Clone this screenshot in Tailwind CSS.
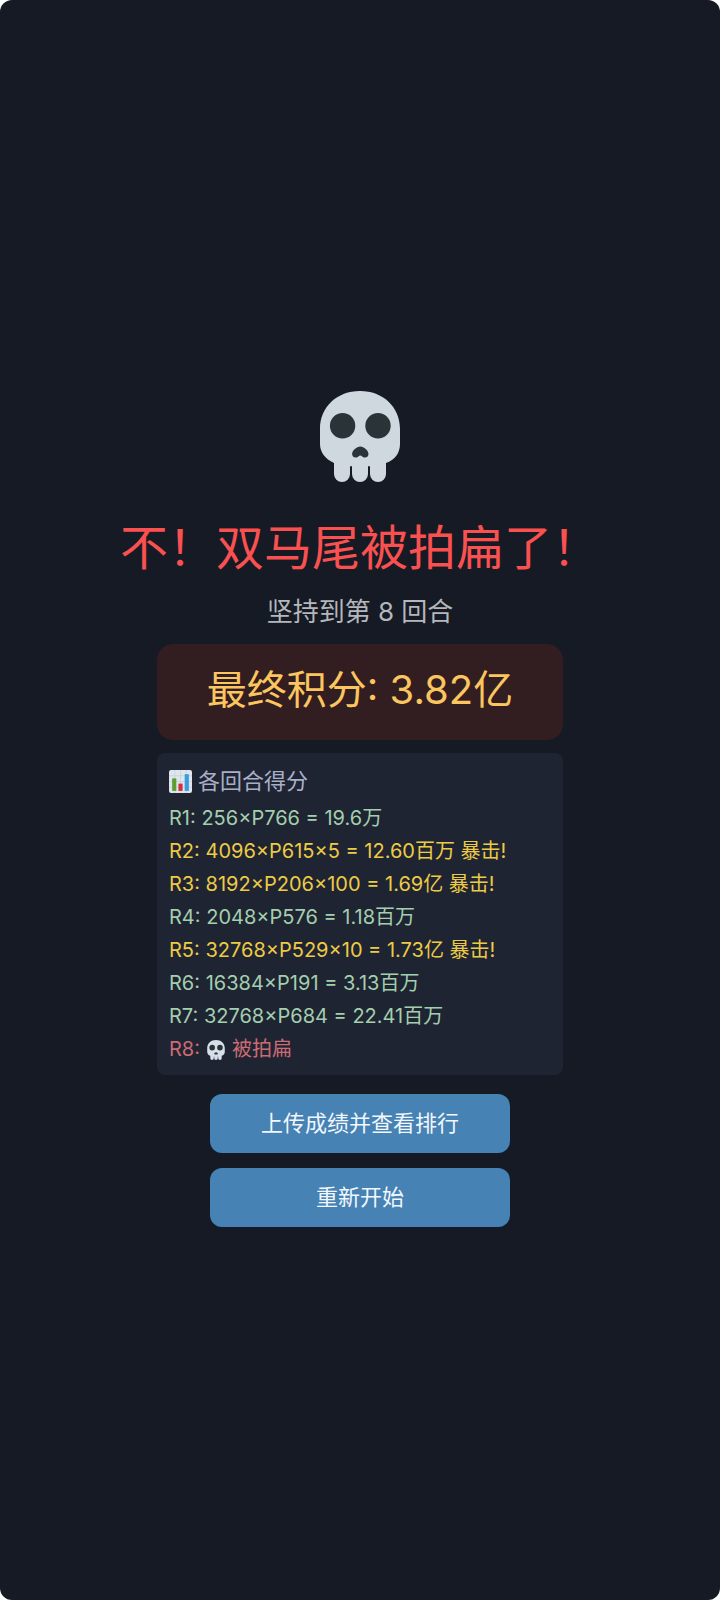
<!DOCTYPE html>
<html lang="zh-CN">
<head>
  <meta charset="UTF-8"/>
  <meta name="viewport" content="width=device-width, initial-scale=1.0"/>
  <title>游戏结束</title>
  <!-- Tailwind CSS -->
  <script src="https://cdn.jsdelivr.net/npm/@tailwindcss/browser@4"></script>
</head>
<body class="bg-white font-[Inter,'Noto_Sans_CJK_SC',sans-serif]">
  <main class="min-h-screen rounded-xl bg-[#151a24] flex flex-col items-center justify-center">
    <!-- Skull -->
    <svg class="w-20 h-[91px] mt-[18px]" viewBox="0 0 80 91" role="img" aria-label="骷髅">
      <path fill="#cfd8df" d="M40 0C63 0 80 16 80 38v15c0 9-5 16-14 19v11a8 8 0 0 1-16 0v-7a1 1 0 0 0-2 0v7a8 8 0 0 1-16 0v-7a1 1 0 0 0-2 0v7a8 8 0 0 1-16 0V72C5 68 0 61 0 53V38C0 16 17 0 40 0Z"/>
      <circle cx="22.600" cy="34.700" r="12.700" fill="#2a3337"/>
      <circle cx="58" cy="34.700" r="12.700" fill="#2a3337"/>
      <path fill="#2a3337" d="M40.300 55.500c3.500 0 8.200 4 8.200 7.500 0 3-3 4.300-5.200 3.200-1.300-.7-1.600-1.800-3-1.800s-1.700 1.100-3 1.800c-2.200 1.100-5.200-.2-5.200-3.200 0-3.500 4.700-7.500 8.200-7.500Z"/>
    </svg>

    <!-- Result -->
    <h1 class="mt-8 text-5xl leading-[68px] text-[#f95050]">不！双马尾被拍扁了！</h1>
    <p class="mt-[10px] text-[26px] leading-[40px] text-[#b4b7bc]">坚持到第 8 回合</p>
    <div class="mt-3 w-full max-w-[406px] h-24 rounded-2xl bg-[#321e20] text-center text-[40px] leading-[92px] text-[#fbc55f]">最终积分: 3.82亿</div>

    <!-- Round scores -->
    <section class="mt-[13px] w-full max-w-[406px] rounded-lg bg-[#1f2432] px-3 pt-3 pb-[9px]">
      <h2 class="flex items-center gap-[6px] h-8 text-[22px] leading-8 text-[#a9afc6]">
        <svg class="w-[23px] h-[23px]" viewBox="0 0 22 22" aria-hidden="true">
          <rect width="22" height="22" rx="2" fill="#dfe7ec"/>
          <path d="M0 5.500h22M0 11h22M0 16.500h22M5.500 0v22M11 0v22M16.500 0v22" stroke="#b9cdd8" stroke-width=".6"/>
          <path d="M3 8h4v12H3z" fill="#5c9e31"/>
          <path d="M9 13h4v7H9z" fill="#d32f3f"/>
          <path d="M15 4h4v16h-4z" fill="#3d9be0"/>
        </svg>
        各回合得分
      </h2>
      <ul class="mt-[5px] text-xl leading-[33px] text-[#a3cfae]">
        <li>R1: 256×P766 = 19.6万</li>
        <li class="text-[#edcb45]">R2: 4096×P615×5 = 12.60百万 暴击!</li>
        <li class="text-[#edcb45]">R3: 8192×P206×100 = 1.69亿 暴击!</li>
        <li>R4: 2048×P576 = 1.18百万</li>
        <li class="text-[#edcb45]">R5: 32768×P529×10 = 1.73亿 暴击!</li>
        <li>R6: 16384×P191 = 3.13百万</li>
        <li>R7: 32768×P684 = 22.41百万</li>
        <li class="flex items-center gap-[7px] text-[#cb6b73]">
          R8:
          <svg class="w-[18px] h-[20px]" viewBox="0 0 80 91" role="img" aria-label="骷髅">
            <path fill="#d6e0ea" d="M40 0C63 0 80 16 80 38v15c0 9-5 16-14 19v11a8 8 0 0 1-16 0v-7a1 1 0 0 0-2 0v7a8 8 0 0 1-16 0v-7a1 1 0 0 0-2 0v7a8 8 0 0 1-16 0V72C5 68 0 61 0 53V38C0 16 17 0 40 0Z"/>
            <circle cx="22.600" cy="34.700" r="12.700" fill="#2a3337"/>
            <circle cx="58" cy="34.700" r="12.700" fill="#2a3337"/>
            <path fill="#2a3337" d="M40.300 55.500c3.500 0 8.200 4 8.200 7.500 0 3-3 4.300-5.200 3.200-1.300-.7-1.600-1.800-3-1.800s-1.700 1.100-3 1.800c-2.200 1.100-5.200-.2-5.200-3.200 0-3.500 4.700-7.500 8.200-7.500Z"/>
          </svg>
          被拍扁
        </li>
      </ul>
    </section>

    <!-- Actions -->
    <div class="mt-[19px] w-full max-w-[300px] flex flex-col gap-[15px] text-[22px] text-[#f1f7fc]">
      <button type="button" class="h-[59px] rounded-xl bg-[#4682b4] cursor-pointer">上传成绩并查看排行</button>
      <button type="button" class="h-[59px] rounded-xl bg-[#4682b4] cursor-pointer">重新开始</button>
    </div>
  </main>
</body>
</html>
